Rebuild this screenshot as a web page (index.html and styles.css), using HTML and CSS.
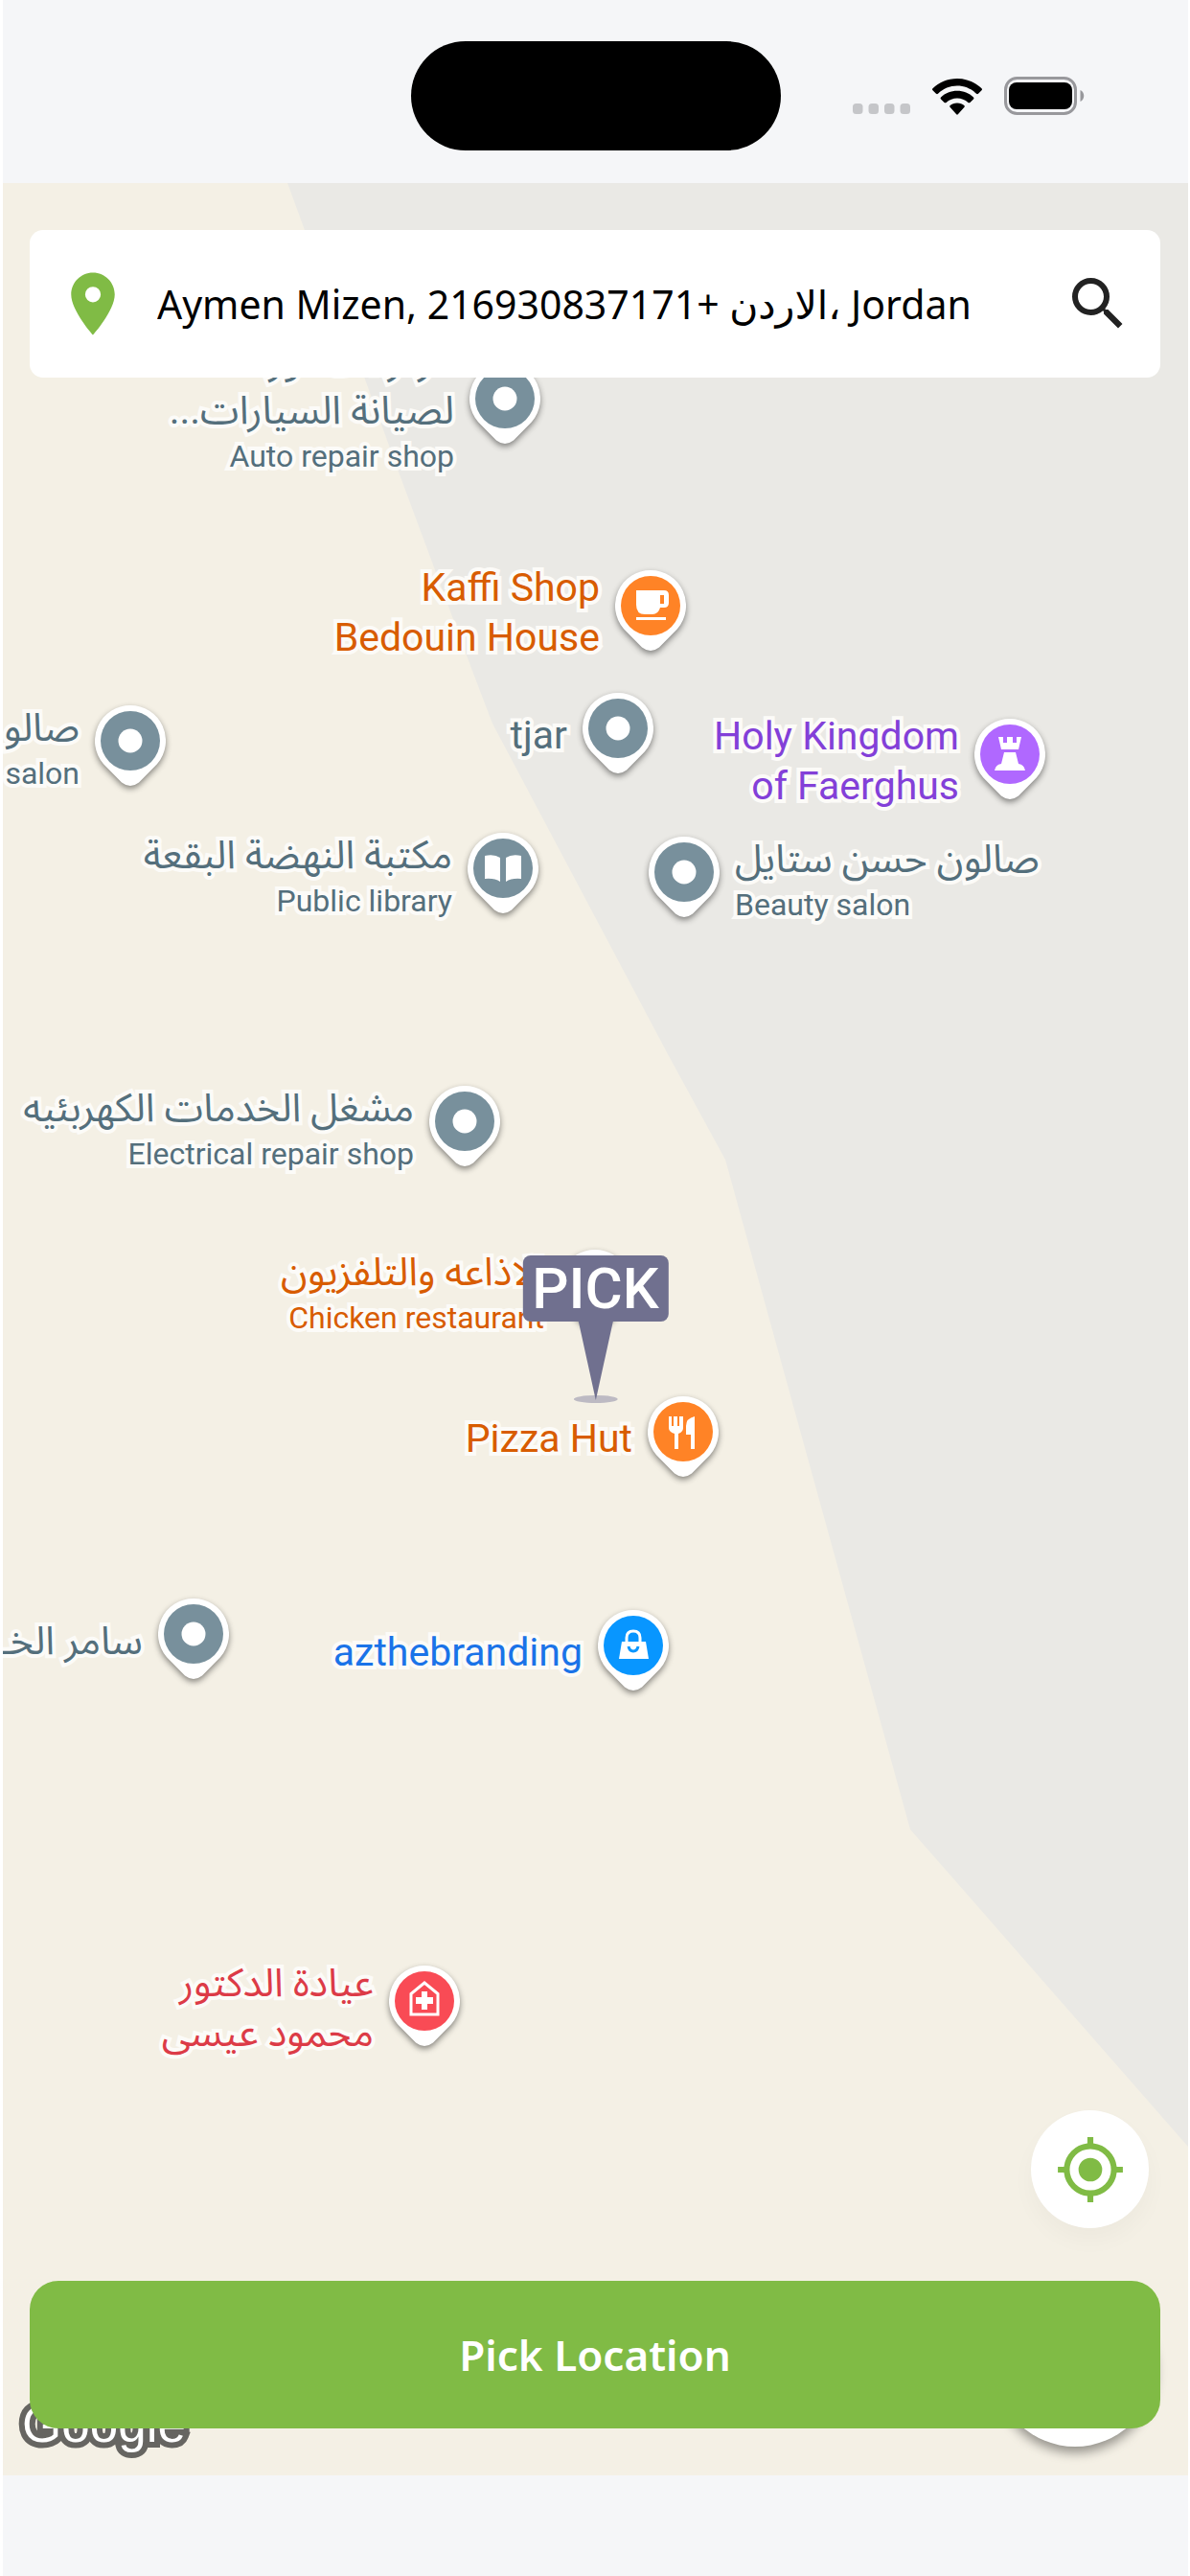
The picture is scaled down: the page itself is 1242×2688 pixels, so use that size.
FILE: index.html
```html
<!DOCTYPE html>
<html lang="en">
<head>
<meta charset="utf-8">
<meta name="viewport" content="width=device-width, initial-scale=1">
<title>Pick Location</title>
<link rel="stylesheet" href="styles.css">
</head>
<body>
<svg class="defs" aria-hidden="true">
  <symbol id="drop" viewBox="0 0 74 84">
    <path d="M37 0a37 37 0 0 1 28 61.200L46 80.500Q37 87.500 28 80.500L9 61.200A37 37 0 0 1 37 0Z" fill="#fff"/>
    <circle cx="37" cy="37" r="31" fill="currentColor"/>
  </symbol>
  <symbol id="drop-dot" viewBox="0 0 74 84">
    <use href="#drop" width="74" height="84"/>
    <circle cx="37" cy="37" r="12.500" fill="#fff"/>
  </symbol>
</svg>

<div class="app">
  <header class="status">
    <div class="status__side"></div>
    <div class="status__island"></div>
    <div class="status__side status__icons">
      <svg class="status__signal" width="61" height="12" viewBox="0 0 61 12" fill="#c5c6c9" aria-label="No signal">
        <rect width="10.500" height="11" rx="3.500"/><rect x="16.500" width="10.500" height="11" rx="3.500"/><rect x="33" width="10.500" height="11" rx="3.500"/><rect x="49.500" width="10.500" height="11" rx="3.500"/>
      </svg>
      <svg class="status__wifi" width="52" height="38" viewBox="0 0 52 38" fill="#000" aria-label="Wi-Fi">
        <path d="M26 0C36 0 45 4 51.500 10.200q1 1 0 2l-3.500 3.500q-1 .9-2 0C40.500 10.500 33.500 7.600 26 7.600S11.500 10.500 6 15.700q-1 .9-2 0L.5 12.200q-1-1 0-2C7 4 16 0 26 0Z"/>
        <path d="M26 12.800c6.500 0 12.500 2.500 17 6.600q1 1 0 2l-3.600 3.500q-1 .9-2 0C34.300 22.200 30.300 20.600 26 20.600s-8.300 1.600-11.400 4.300q-1 .9-2 0L9 21.400q-1-1 0-2c4.500-4.100 10.500-6.600 17-6.600Z"/>
        <path d="M26 25.500c3.200 0 5.500 1 7.300 2.500q1 1 0 2l-6.500 7.300q-.8.900-1.600 0L18.700 30q-1-1 0-2c1.800-1.500 4.100-2.500 7.300-2.500Z"/>
      </svg>
      <svg class="status__battery" width="84" height="40" viewBox="0 0 84 40" aria-label="Battery full">
        <rect x="1.500" y="1.500" width="73" height="37" rx="12" fill="none" stroke="#98989c" stroke-width="3"/>
        <rect x="5" y="6" width="66" height="28" rx="8" fill="#000"/>
        <path d="M79.500 14c5 2 5 10 0 12Z" fill="#98989c"/>
      </svg>
    </div>
  </header>

  <main class="map">
    <svg class="map__ground" viewBox="3 191 1237 2392" preserveAspectRatio="none" aria-hidden="true">
      <path d="M300 191 318 240 380 393 414 487 453 592 493 700 514 755 697 1100 757 1210 950 1909 1240 2240V191Z" fill="#eae9e5"/>
    </svg>

    <div class="place place--auto">
      <svg class="place__pin"><use href="#drop-dot"/></svg>
      <div class="place__label"><span dir="rtl">مركز الصقور</span><span dir="rtl">لصيانة السيارات...</span><small>Auto repair shop</small></div>
    </div>
    <div class="place place--kaffi place--food">
      <svg class="place__pin" viewBox="0 0 74 84"><use href="#drop"/>
        <g fill="#fff"><path d="M22 21h29q5 0 5 5v8q0 5-5 5h-4q-2 7-8 7h-8q-9 0-9-10Zm25 5v9h4v-9Z" fill-rule="evenodd"/><path d="M22 49h31v3H22Z"/></g>
      </svg>
      <div class="place__label"><span>Kaffi Shop</span><span>Bedouin House</span></div>
    </div>
    <div class="place place--salon">
      <svg class="place__pin"><use href="#drop-dot"/></svg>
      <div class="place__label"><span dir="rtl">صالو</span><small>salon</small></div>
    </div>
    <div class="place place--library">
      <svg class="place__pin" viewBox="0 0 74 84"><use href="#drop"/>
        <path d="M18 24q10-2 16 2v25q-6-4-16-3ZM56 24q-10-2-16 2v25q6-4 16-3Z" fill="#fff"/>
      </svg>
      <div class="place__label"><span dir="rtl">مكتبة النهضة البقعة</span><small>Public library</small></div>
    </div>
    <div class="place place--tjar">
      <svg class="place__pin"><use href="#drop-dot"/></svg>
      <div class="place__label"><span>tjar</span></div>
    </div>
    <div class="place place--holy">
      <svg class="place__pin" viewBox="0 0 74 84"><use href="#drop"/>
        <path d="M25 19h5v6h4v-6h6v6h4v-6h5l-3 13H28ZM31 35h12l3 12q6 1 7 7H21q1-6 7-7Z" fill="#fff"/>
      </svg>
      <div class="place__label"><span>Holy Kingdom</span><span>of Faerghus</span></div>
    </div>
    <div class="place place--beauty place--after">
      <svg class="place__pin"><use href="#drop-dot"/></svg>
      <div class="place__label"><span dir="rtl">صالون حسن ستايل</span><small>Beauty salon</small></div>
    </div>
    <div class="place place--electric">
      <svg class="place__pin"><use href="#drop-dot"/></svg>
      <div class="place__label"><span dir="rtl">مشغل الخدمات الكهربئيه</span><small>Electrical repair shop</small></div>
    </div>
    <div class="place place--chicken place--food">
      <svg class="place__pin"><use href="#drop-dot"/></svg>
      <div class="place__label"><span dir="rtl">الاذاعه والتلفزيون</span><small>Chicken restaurant</small></div>
    </div>
    <div class="place place--pizza place--food">
      <svg class="place__pin" viewBox="0 0 74 84"><use href="#drop"/>
        <path d="M22 21h3v10h2V21h4v10h2V21h4v12q0 4-5 6v16h-4V39q-6-2-6-6ZM49 21v34h-4V40h-5V31q0-8 9-10Z" fill="#fff"/>
      </svg>
      <div class="place__label"><span>Pizza Hut</span></div>
    </div>
    <div class="place place--samer">
      <svg class="place__pin"><use href="#drop-dot"/></svg>
      <div class="place__label"><span dir="rtl">سامر الخـ</span></div>
    </div>
    <div class="place place--branding">
      <svg class="place__pin" viewBox="0 0 74 84"><use href="#drop"/>
        <path d="M25 33h25l3 18H22Z" fill="#fff"/>
        <path d="M30 34v-5q0-7 7-7t7 7v5" fill="none" stroke="#fff" stroke-width="3"/>
        <path d="M32 38q1 5 5 5t5-5" fill="none" stroke="currentColor" stroke-width="3"/>
      </svg>
      <div class="place__label"><span>azthebranding</span></div>
    </div>
    <div class="place place--clinic">
      <svg class="place__pin" viewBox="0 0 74 84"><use href="#drop"/>
        <path d="M23 51V29.500L37 18l14 11.500V51Z" fill="none" stroke="#fff" stroke-width="3"/>
        <path d="M34 27h6v6h6v7h-6v6h-6v-6h-6v-7h6Z" fill="#fff"/>
      </svg>
      <div class="place__label"><span dir="rtl">عيادة الدكتور</span><span dir="rtl">محمود عيسى</span></div>
    </div>

    <div class="picker">
      <div class="picker__label">PICK</div>
      <svg width="46" height="86" viewBox="0 0 46 86" aria-hidden="true">
        <ellipse cx="23" cy="81" rx="23" ry="4" fill="#bdbac3"/>
        <path d="M5 0h36L23 82Z" fill="#70708f"/>
      </svg>
    </div>

    <div class="map__brand">Google</div>
    <div class="map__control"></div>

    <div class="overlay">
      <form class="search">
        <svg width="78" height="78" viewBox="0 0 24 24" fill="#80bb45" aria-hidden="true"><path d="M12 2C8.130 2 5 5.130 5 9c0 5.250 7 13 7 13s7-7.750 7-13c0-3.870-3.130-7-7-7zm0 9.500a2.500 2.500 0 1 1 0-5 2.500 2.500 0 0 1 0 5z"/></svg>
        <input class="search__field" type="text" aria-label="Address" value="Aymen Mizen, 216930837171+ الاردن، Jordan">
        <button class="search__go" type="button" aria-label="Search">
          <svg width="72" height="72" viewBox="0 0 24 24" fill="#222" aria-hidden="true"><path d="M15.500 14h-.79l-.28-.27A6.471 6.471 0 0 0 16 9.500 6.500 6.500 0 1 0 9.500 16c1.610 0 3.090-.59 4.230-1.570l.27.28v.79l5 4.990L20.490 19l-4.990-5zm-6 0C7.010 14 5 11.990 5 9.500S7.010 5 9.500 5 14 7.010 14 9.500 11.990 14 9.500 14z"/></svg>
        </button>
      </form>
      <div class="actions">
        <button class="locate" type="button" aria-label="My location">
          <svg width="74" height="74" viewBox="0 0 24 24" fill="#80bb45" aria-hidden="true"><path d="M12 8a4 4 0 1 0 0 8 4 4 0 0 0 0-8zm8.940 3A8.994 8.994 0 0 0 13 3.060V1h-2v2.060A8.994 8.994 0 0 0 3.060 11H1v2h2.060A8.994 8.994 0 0 0 11 20.940V23h2v-2.060A8.994 8.994 0 0 0 20.940 13H23v-2h-2.060zM12 19a7 7 0 1 1 0-14 7 7 0 0 1 0 14z"/></svg>
        </button>
        <button class="confirm" type="button">Pick Location</button>
      </div>
    </div>
  </main>
</div>
</body>
</html>
```
FILE: styles.css
```css
* { box-sizing: border-box; }

body {
  margin: 0;
  background: #fff;
  font-family: Roboto, "Noto Sans Arabic", "Noto Sans", "DejaVu Sans", sans-serif;
}

.defs { display: block; width: 0; height: 0; position: absolute; }

.app {
  display: flex;
  flex-direction: column;
  min-height: 100vh;
  margin: 0 2px 0 3px;
  padding-bottom: 105px;
  background: #f5f6f8;
}

/* Status bar */
.status {
  display: flex;
  align-items: center;
  height: 191px;
  padding-top: 8px;
}
.status__side { flex: 1 1 0; }
.status__island {
  width: 386px;
  height: 114px;
  border-radius: 57px;
  background: #000;
}
.status__icons {
  display: flex;
  align-items: flex-end;
}
.status__signal { margin-left: 75px; }
.status__wifi { margin-left: 22px; }
.status__battery { margin-left: 23px; }

/* Map */
.map {
  position: relative;
  display: flex;
  flex: 1;
  overflow: hidden;
  background: #f4f0e5;
}
.map__ground {
  position: absolute;
  inset: 0;
  width: 100%;
  height: 100%;
}

.place {
  position: absolute;
  top: var(--y);
  right: calc(100% - var(--x) - 37px);
  display: flex;
  flex-direction: row-reverse;
  align-items: center;
  gap: 16px;
  transform: translateY(-50%);
  color: #78909c;
  --ink: #546f7c;
}
.place--after {
  right: auto;
  left: calc(var(--x) - 37px);
  flex-direction: row;
}
.place--after .place__label { align-items: flex-start; }
.place__pin {
  width: 74px;
  height: 84px;
  flex: none;
  overflow: visible;
  filter: drop-shadow(0 3px 3px rgba(0, 0, 0, .45));
}
.place__label {
  display: flex;
  flex-direction: column;
  align-items: flex-end;
  padding-top: 4px;
  color: var(--ink);
  font-size: 41px;
  line-height: 52px;
  white-space: nowrap;
  -webkit-text-stroke: 8px #fcfbf8;
  paint-order: stroke fill;
  stroke-linejoin: round;
}
.place__label small {
  margin-top: 2px;
  font-size: 32px;
  line-height: 40px;
}

.place--food { color: #ff8326; --ink: #d85c00; }
.place--auto { --x: 524px; --y: 230px; }
.place--kaffi { --x: 676px; --y: 446px; }
.place--salon { --x: 133px; --y: 587px; }
.place--library { --x: 522px; --y: 720px; }
.place--tjar { --x: 642px; --y: 574px; }
.place--holy { --x: 1051px; --y: 601px; color: #b068ff; --ink: #8340d8; }
.place--beauty { --x: 711px; --y: 724px; }
.place--electric { --x: 482px; --y: 984px; }
.place--chicken { --x: 618px; --y: 1155px; }
.place--pizza { --x: 710px; --y: 1308px; }
.place--samer { --x: 199px; --y: 1519px; }
.place--branding { --x: 658px; --y: 1531px; color: #0896ff; --ink: #1a73e8; }
.place--clinic { --x: 440px; --y: 1902px; color: #f94b55; --ink: #dc3b47; }

/* Centre marker */
.picker {
  position: absolute;
  top: 1119px;
  left: 50%;
  display: flex;
  flex-direction: column;
  align-items: center;
  transform: translateX(-50%);
}
.picker__label {
  padding: 0 10px;
  border-radius: 8px;
  background: #70708f;
  color: #fff;
  font: 500 60px/69px Roboto, sans-serif;
}

.map__brand {
  position: absolute;
  bottom: 23px;
  left: 20px;
  color: #fff;
  font: 53px/60px "Liberation Sans", sans-serif;
  -webkit-text-stroke: 12px #666561;
  paint-order: stroke fill;
}
.map__control {
  position: absolute;
  right: 34px;
  bottom: 30px;
  width: 168px;
  height: 168px;
  border-radius: 50%;
  background: #fff;
  box-shadow: 0 6px 12px rgba(0, 0, 0, .4);
}

/* Controls above the map */
.overlay {
  position: relative;
  display: flex;
  flex: 1;
  flex-direction: column;
  justify-content: space-between;
  padding: 49px 29px 49px 28px;
}
.search {
  display: flex;
  align-items: center;
  height: 154px;
  padding: 0 29px 0 27px;
  border-radius: 14px;
  background: #fff;
}
.search__field {
  flex: 1;
  min-width: 0;
  margin: 0 24px 0 28px;
  padding: 0;
  border: 0;
  background: none;
  color: #000;
  font: 41px/60px "Noto Sans", "DejaVu Sans", sans-serif;
  outline: 0;
}
.search__go {
  display: flex;
  padding: 0;
  border: 0;
  background: none;
}
.actions {
  display: flex;
  flex-direction: column;
  align-items: flex-end;
  gap: 55px;
}
.locate {
  display: flex;
  align-items: center;
  justify-content: center;
  width: 123px;
  height: 123px;
  margin-right: 12px;
  padding: 0;
  border: 0;
  border-radius: 50%;
  background: #fff;
  box-shadow: 0 12px 24px rgba(0, 0, 0, .03);
}
.confirm {
  width: 100%;
  height: 154px;
  padding: 0;
  border: 0;
  border-radius: 30px;
  background: #80bb45;
  color: #fff;
  font: 600 44px/60px "Noto Sans", sans-serif;
}
```
